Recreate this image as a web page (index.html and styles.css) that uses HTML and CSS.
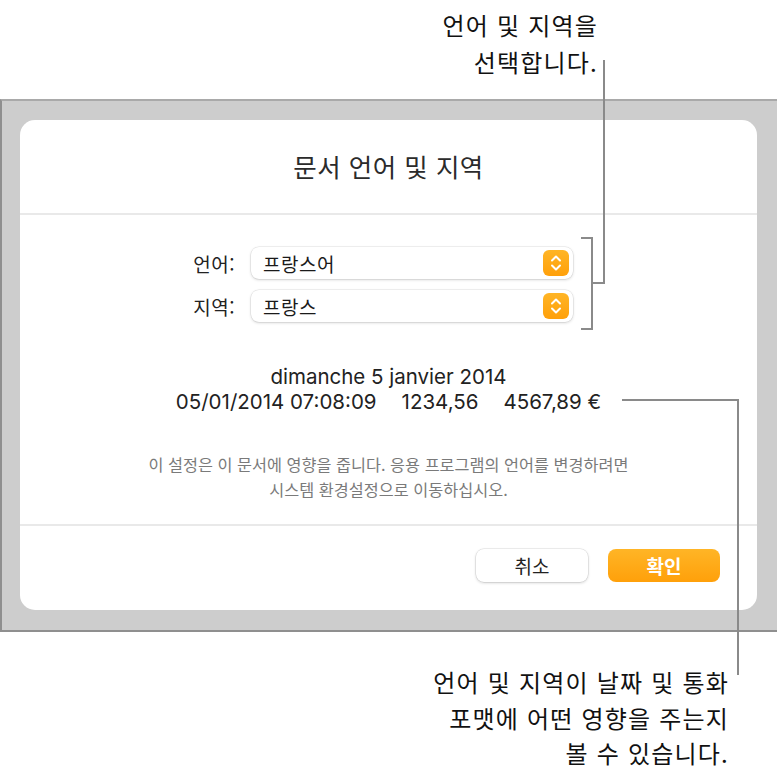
FILE: index.html
```html
<!DOCTYPE html>
<html lang="ko">
<head>
  <meta charset="UTF-8">
  <title>문서 언어 및 지역</title>
  <link rel="stylesheet" href="styles.css">
</head>
<body>
  <div class="page">
    <div class="note note-top">언어 및 지역을<br>선택합니다.</div>

    <div class="frame">
      <div class="dialog">
        <div class="title">문서 언어 및 지역</div>

        <div class="form">
          <label class="label">언어:</label>
          <div class="select">
            <span>프랑스어</span>
            <span class="stepper">
              <svg width="26" height="26" viewBox="0 0 26 26"><path d="M9 10.5 13 6.5 17 10.5M9 15.5 13 19.5 17 15.5" fill="none" stroke="#fff" stroke-width="2" stroke-linecap="round" stroke-linejoin="round"/></svg>
            </span>
          </div>
          <label class="label">지역:</label>
          <div class="select">
            <span>프랑스</span>
            <span class="stepper">
              <svg width="26" height="26" viewBox="0 0 26 26"><path d="M9 10.5 13 6.5 17 10.5M9 15.5 13 19.5 17 15.5" fill="none" stroke="#fff" stroke-width="2" stroke-linecap="round" stroke-linejoin="round"/></svg>
            </span>
          </div>
        </div>

        <div class="preview">
          <div>dimanche 5 janvier 2014</div>
          <div>05/01/2014 07:08:09<span class="gap">1234,56</span><span class="gap">4567,89 €</span></div>
        </div>

        <p class="hint">이 설정은 이 문서에 영향을 줍니다. 응용 프로그램의 언어를 변경하려면<br>시스템 환경설정으로 이동하십시오.</p>

        <div class="footer">
          <button class="btn btn-cancel">취소</button>
          <button class="btn btn-ok">확인</button>
        </div>
      </div>
    </div>

    <div class="note note-bottom">언어 및 지역이 날짜 및 통화<br>포맷에 어떤 영향을 주는지<br>볼 수 있습니다.</div>

    <!-- callout lines -->
    <svg class="callouts" width="777" height="769" viewBox="0 0 777 769">
      <g fill="none" stroke="#8a8a8a" stroke-width="2">
        <path d="M581 238H592V329H581"/>
        <path d="M592 283H604V60"/>
        <path d="M622 400H738V675"/>
      </g>
    </svg>
  </div>
</body>
</html>
```

FILE: styles.css
```css
body {
  margin: 0;
  background: #fff;
  font-family: "Inter", "Noto Sans CJK KR", sans-serif;
  color: #1a1a1a;
}
.page {
  position: relative;
  width: 777px;
  height: 769px;
  overflow: hidden;
}
.note {
  font-family: "Noto Sans CJK KR", sans-serif;
  text-align: right;
  color: #111;
  font-size: 24px;
  letter-spacing: 1.2px;
}
.note-top {
  padding: 6px 179px 0 0;
  line-height: 37px;
}
.note-bottom {
  margin-top: 32px;
  padding-right: 48px;
  line-height: 35.5px;
}
.frame {
  margin-top: 19px;
  padding: 19px 20px 20px 18px;
  background: #cdcdcd;
  border-top: 2px solid #a9a9a9;
  border-left: 2px solid #8f8f8f;
  border-bottom: 2px solid #8f8f8f;
}
.dialog {
  height: 490px;
  background: #fff;
  border-radius: 15px;
}
.title {
  height: 93px;
  line-height: 91px;
  text-align: center;
  font-family: "Noto Sans CJK KR", sans-serif;
  font-size: 25.5px;
  letter-spacing: 0.5px;
  color: #2b2b2b;
  border-bottom: 2px solid #e9e9e9;
}
.form {
  display: grid;
  grid-template-columns: 60px 322px;
  column-gap: 16px;
  row-gap: 11px;
  align-items: center;
  padding: 32px 0 0 155px;
}
.label {
  text-align: right;
  font-family: "Noto Sans CJK KR", sans-serif;
  font-size: 19px;
  letter-spacing: 0.5px;
  color: #222;
}
.select {
  display: flex;
  align-items: center;
  justify-content: space-between;
  height: 32px;
  padding: 0 4px 0 12px;
  border-radius: 8px;
  background: #fff;
  box-shadow: 0 0 0 0.5px rgba(0,0,0,0.1), 0 1px 3px rgba(0,0,0,0.16);
  font-family: "Noto Sans CJK KR", sans-serif;
  font-size: 19px;
  letter-spacing: 0.5px;
  color: #1a1a1a;
}
.stepper {
  display: flex;
  width: 26px;
  height: 26px;
  border-radius: 6px;
  background: linear-gradient(#ffb526, #ffa00a);
}
.preview {
  margin-top: 42px;
  text-align: center;
  font-size: 20.5px;
  line-height: 25px;
  color: #222;
}
.gap {
  margin-left: 25px;
}
.hint {
  margin: 38px 0 0;
  text-align: center;
  font-family: "Noto Sans CJK KR", sans-serif;
  font-size: 16.3px;
  line-height: 25px;
  color: #7a7a7a;
  padding-bottom: 22px;
  border-bottom: 2px solid #e9e9e9;
}
.footer {
  display: flex;
  justify-content: flex-end;
  gap: 20px;
  padding: 23px 37px 0 0;
}
.btn {
  width: 112px;
  height: 33px;
  border: none;
  border-radius: 8px;
  font-family: "Noto Sans CJK KR", sans-serif;
  font-size: 19px;
}
.btn-cancel {
  background: #fff;
  color: #222;
  box-shadow: 0 0 0 0.5px rgba(0,0,0,0.12), 0 1px 3px rgba(0,0,0,0.18);
}
.btn-ok {
  background: linear-gradient(#ffb526, #ffa00a);
  color: #fff;
  font-weight: bold;
}
.callouts {
  position: absolute;
  left: 0;
  top: 0;
}
```
